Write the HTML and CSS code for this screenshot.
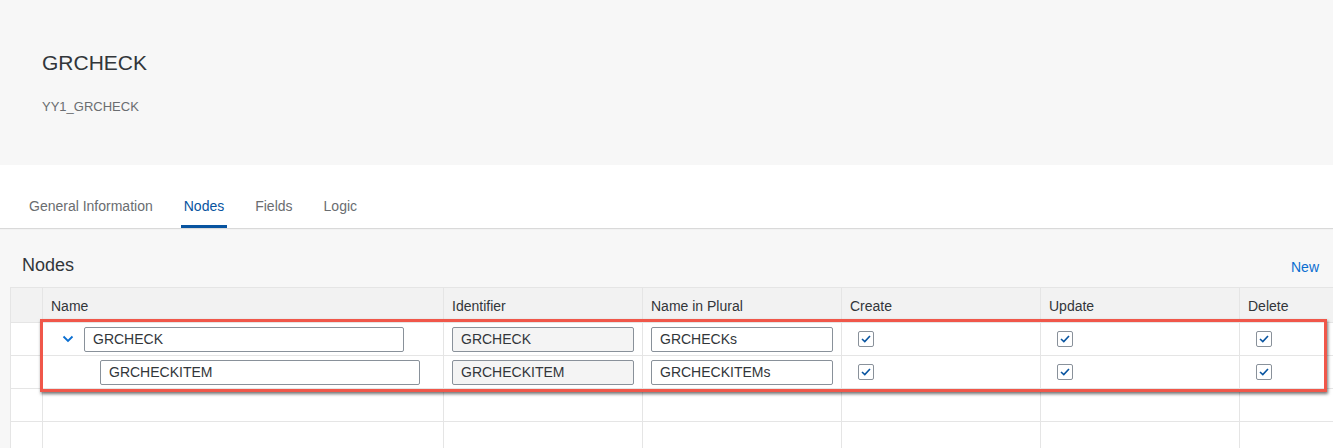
FILE: index.html
```html
<!DOCTYPE html>
<html>
<head>
<meta charset="utf-8">
<link rel="stylesheet" href="styles.css">
</head>
<body>
<header class="obj-header">
  <h1 class="obj-title">GRCHECK</h1>
  <div class="obj-subtitle">YY1_GRCHECK</div>
</header>
<nav class="tabbar">
  <div class="tab">General Information</div>
  <div class="tab active">Nodes</div>
  <div class="tab">Fields</div>
  <div class="tab">Logic</div>
</nav>
<main class="content">
  <div class="toolbar">
    <div class="section-title">Nodes</div>
    <div class="link">New</div>
  </div>
  <div class="table-wrap">
    <table class="grid">
      <colgroup>
        <col class="c-sel"><col class="c-name"><col class="c-mid"><col class="c-mid"><col class="c-mid"><col class="c-mid"><col class="c-last">
      </colgroup>
      <thead>
        <tr>
          <th></th><th>Name</th><th>Identifier</th><th>Name in Plural</th><th>Create</th><th>Update</th><th>Delete</th>
        </tr>
      </thead>
      <tbody>
        <tr>
          <td></td>
          <td><div class="name-cell lvl1"><span class="chev"><svg width="12" height="8" viewBox="0 0 12 8"><polyline points="1.5,1.5 6,6 10.5,1.5" fill="none" stroke="#0a6ed1" stroke-width="1.8"/></svg></span><div class="inp name-inp">GRCHECK</div></div></td>
          <td><div class="inp ro">GRCHECK</div></td>
          <td><div class="inp">GRCHECKs</div></td>
          <td><span class="cb"><svg width="10" height="8" viewBox="0 0 10 8"><polyline points="1,4 3.8,6.6 9,1" fill="none" stroke="#0854a0" stroke-width="1.6"/></svg></span></td>
          <td><span class="cb"><svg width="10" height="8" viewBox="0 0 10 8"><polyline points="1,4 3.8,6.6 9,1" fill="none" stroke="#0854a0" stroke-width="1.6"/></svg></span></td>
          <td><span class="cb"><svg width="10" height="8" viewBox="0 0 10 8"><polyline points="1,4 3.8,6.6 9,1" fill="none" stroke="#0854a0" stroke-width="1.6"/></svg></span></td>
        </tr>
        <tr>
          <td></td>
          <td><div class="name-cell lvl2"><div class="inp name-inp">GRCHECKITEM</div></div></td>
          <td><div class="inp ro">GRCHECKITEM</div></td>
          <td><div class="inp">GRCHECKITEMs</div></td>
          <td><span class="cb"><svg width="10" height="8" viewBox="0 0 10 8"><polyline points="1,4 3.8,6.6 9,1" fill="none" stroke="#0854a0" stroke-width="1.6"/></svg></span></td>
          <td><span class="cb"><svg width="10" height="8" viewBox="0 0 10 8"><polyline points="1,4 3.8,6.6 9,1" fill="none" stroke="#0854a0" stroke-width="1.6"/></svg></span></td>
          <td><span class="cb"><svg width="10" height="8" viewBox="0 0 10 8"><polyline points="1,4 3.8,6.6 9,1" fill="none" stroke="#0854a0" stroke-width="1.6"/></svg></span></td>
        </tr>
        <tr class="empty"><td></td><td></td><td></td><td></td><td></td><td></td><td></td></tr>
        <tr class="empty"><td></td><td></td><td></td><td></td><td></td><td></td><td></td></tr>
      </tbody>
    </table>
    <div class="highlight"></div>
  </div>
</main>
</body>
</html>
```
FILE: styles.css
```css
html, body {
  margin: 0;
  padding: 0;
}
body {
  font-family: "Liberation Sans", Arial, sans-serif;
  color: #32363a;
  background: #f7f7f7;
  width: 1333px;
  height: 448px;
  overflow: hidden;
}
.obj-header {
  height: 165px;
  box-sizing: border-box;
  padding: 50px 42px 0;
  background: #f7f7f7;
}
.obj-title {
  margin: 0;
  font-size: 21px;
  line-height: 25px;
  font-weight: normal;
  color: #32363a;
}
.obj-subtitle {
  margin-top: 24px;
  font-size: 13px;
  line-height: 16px;
  color: #6a6d70;
}
.tabbar {
  height: 63px;
  background: #fff;
  display: flex;
  align-items: flex-end;
  gap: 25px;
  padding-left: 26px;
  box-shadow: 0 1px 1px rgba(0, 0, 0, 0.12);
  position: relative;
}
.tab {
  font-size: 14px;
  line-height: 16px;
  padding: 0 3px 11px;
  border-bottom: 3px solid transparent;
  color: #6a6d70;
}
.tab.active {
  color: #0854a0;
  border-bottom-color: #0854a0;
}
.content {
  padding-top: 26px;
}
.toolbar {
  display: flex;
  justify-content: space-between;
  align-items: flex-end;
  padding: 0 14px 0 22px;
  height: 22px;
  margin-bottom: 11px;
}
.section-title {
  font-size: 18px;
  line-height: 22px;
  color: #32363a;
}
.link {
  font-size: 14px;
  line-height: 16px;
  color: #0a6ed1;
  padding-bottom: 1px;
}
.table-wrap {
  position: relative;
  margin-left: 10px;
}
.grid {
  border-collapse: collapse;
  table-layout: fixed;
  width: 1323px;
  background: #fff;
}
.c-sel { width: 32px; }
.c-name { width: 401px; }
.c-mid { width: 199px; }
.c-last { width: 94px; }
.grid th, .grid td {
  border: 1px solid #e5e5e5;
  padding: 0;
  text-align: left;
  vertical-align: middle;
}
.grid th {
  background: #f2f2f2;
  height: 35px;
  font-size: 14px;
  font-weight: normal;
  color: #32363a;
  padding-left: 8px;
  padding-top: 2px;
  box-sizing: border-box;
}
.grid td {
  height: 33px;
  box-sizing: border-box;
  padding-left: 8px;
}
.grid td:first-child, .grid th:first-child {
  padding-left: 0;
  background: #fff;
}
.grid th:first-child {
  background: #f2f2f2;
}
.name-cell {
  display: flex;
  align-items: center;
}
.lvl1 {
  padding-left: 11px;
}
.lvl2 {
  padding-left: 49px;
}
.chev {
  width: 22px;
  display: flex;
  align-items: center;
  justify-content: flex-start;
}
.inp {
  box-sizing: border-box;
  height: 25px;
  width: 182px;
  border: 1px solid #89919a;
  border-radius: 2px;
  background: #fff;
  font-size: 14px;
  line-height: 23px;
  padding-left: 8px;
  color: #32363a;
}
.name-inp {
  width: 320px;
}
.inp.ro {
  background: #f4f4f4;
}
.grid td .cb {
  margin-left: 8px;
}
.cb {
  box-sizing: border-box;
  width: 16px;
  height: 16px;
  border: 1px solid #89919a;
  border-radius: 2px;
  background: #fff;
  display: flex;
  align-items: center;
  justify-content: center;
}
.highlight {
  position: absolute;
  left: 30px;
  top: 32px;
  width: 1287px;
  height: 73px;
  box-sizing: border-box;
  border: 3px solid #f0574a;
  box-shadow: 1px 2px 3px rgba(0, 0, 0, 0.55);
  pointer-events: none;
}
```
